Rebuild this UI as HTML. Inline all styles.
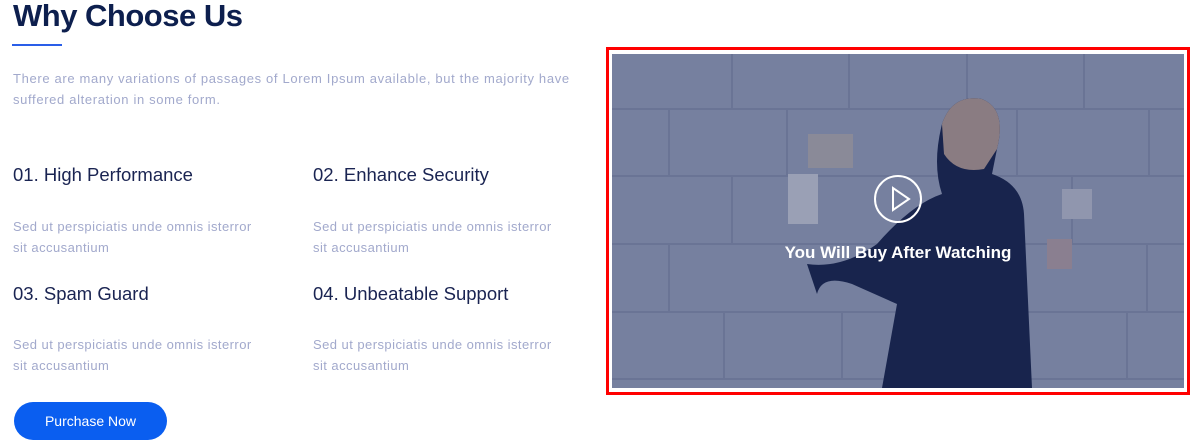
<!DOCTYPE html>
<html><head><style>
body{margin:0;width:1200px;height:447px;background:#fff;font-family:"Liberation Sans",sans-serif;position:relative;overflow:hidden}
.a{position:absolute;white-space:nowrap}
h1{position:absolute;left:13px;top:-2px;margin:0;font-size:31px;font-weight:bold;color:#0d1f4e;letter-spacing:-0.5px}
.bar{left:12px;top:44px;width:50px;height:2px;background:#2a5ee8}
.p{color:#a2a9cc;font-size:13px;line-height:21px;letter-spacing:0.45px}
.t{color:#1a2452;font-size:18.5px}
.btn{left:14px;top:402px;width:153px;height:38px;border-radius:19px;background:#0a5ef0;color:#fff;font-size:14px;text-align:center;line-height:38px}
</style></head><body>
<h1>Why Choose Us</h1>
<div class="a bar"></div>
<div class="a p" style="left:13px;top:68px;letter-spacing:0.65px">There are many variations of passages of Lorem Ipsum available, but the majority have<br>suffered alteration in some form.</div>
<div class="a t" style="left:13px;top:164px">01. High Performance</div>
<div class="a t" style="left:313px;top:164px">02. Enhance Security</div>
<div class="a p" style="left:13px;top:216px">Sed ut perspiciatis unde omnis isterror<br>sit accusantium</div>
<div class="a p" style="left:313px;top:216px">Sed ut perspiciatis unde omnis isterror<br>sit accusantium</div>
<div class="a t" style="left:13px;top:283px">03. Spam Guard</div>
<div class="a t" style="left:313px;top:283px">04. Unbeatable Support</div>
<div class="a p" style="left:13px;top:334px">Sed ut perspiciatis unde omnis isterror<br>sit accusantium</div>
<div class="a p" style="left:313px;top:334px">Sed ut perspiciatis unde omnis isterror<br>sit accusantium</div>
<div class="a btn">Purchase Now</div>
<div class="a" style="left:606px;top:47px;width:578px;height:342px;border:3px solid #f00"></div>
<svg class="a" style="left:612px;top:54px" width="572" height="334" viewBox="0 0 572 334">
<rect width="572" height="334" fill="#76809f"/>
<g stroke="#6a7495" stroke-width="2" fill="none">
<path d="M0 55H572M0 122H572M0 190H572M0 258H572M0 325H572"/>
<path d="M120 0V55M237 0V55M355 0V55M472 0V55M57 55V122M175 55V122M405 55V122M537 55V122M120 122V190M460 122V190M57 190V258M535 190V258M112 258V325M230 258V325M515 258V325"/>
</g>
<rect x="196" y="80" width="45" height="34" fill="#8a8a98"/>
<rect x="176" y="120" width="30" height="50" fill="#9aa0b5"/>
<rect x="450" y="135" width="30" height="30" fill="#9096ae"/>
<rect x="435" y="185" width="25" height="30" fill="#8a7f90"/>
<path d="M330 70Q340 40 370 45Q395 55 385 95L380 120Q410 130 412 160L420 334H270L285 250L240 230Q210 220 205 240L195 210Q230 215 265 190Q300 150 330 140Q320 110 330 70Z" fill="#18244d"/>
<path d="M330 70Q340 40 370 45Q395 55 385 95L372 115Q345 120 332 100Z" fill="#8a7c82"/>
<circle cx="286" cy="145" r="23" fill="none" stroke="#fff" stroke-width="2"/>
<path d="M281 134V156L297 145Z" fill="none" stroke="#fff" stroke-width="2"/>
<text x="286" y="204" text-anchor="middle" fill="#fff" font-family="Liberation Sans" font-size="17" font-weight="bold">You Will Buy After Watching</text>
</svg>
</body></html>
